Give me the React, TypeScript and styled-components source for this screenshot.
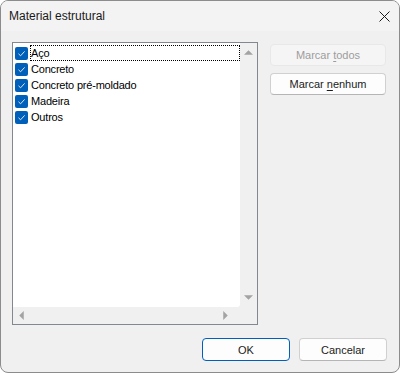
import { FC } from "react";
import styled, { createGlobalStyle } from "styled-components";

const font = `"Liberation Sans", Arial, sans-serif`;

const GlobalStyle = createGlobalStyle`
  html, body {
    margin: 0;
    padding: 0;
    background: #ffffff;
  }
  body {
    font-family: ${font};
  }
`;

const Window = styled.div`
  width: 400px;
  height: 373px;
  box-sizing: border-box;
  border: 1px solid #8c8c8c;
  border-radius: 8px;
  overflow: hidden;
  background: #f0f0f0;
  display: flex;
  flex-direction: column;
`;

const TitleBar = styled.div`
  height: 30px;
  flex: none;
  background: #f3f3f3;
  display: flex;
  align-items: center;
  justify-content: space-between;
  padding-left: 8px;
`;

const Title = styled.span`
  font-size: 12px;
  color: #1a1a1a;
  padding-bottom: 1px;
`;

const CloseButton = styled.div`
  width: 30px;
  height: 30px;
  display: flex;
  align-items: center;
  justify-content: center;
`;

const Body = styled.div`
  flex: 1;
  display: flex;
  flex-direction: column;
  padding: 11px 12px 11px 11px;
  gap: 13px;
`;

const Main = styled.div`
  display: flex;
  gap: 12px;
`;

const ListBox = styled.div`
  width: 246px;
  height: 283px;
  box-sizing: border-box;
  border: 1px solid #828790;
  display: grid;
  grid-template-columns: 1fr 17px;
  grid-template-rows: 1fr 17px;
  background: #f0f0f0;
`;

const Items = styled.div`
  background: #ffffff;
  padding-top: 1px;
  border-bottom-right-radius: 3px;
  display: flex;
  flex-direction: column;
`;

const Row = styled.div`
  height: 16px;
  display: flex;
  align-items: center;
  padding-left: 2px;
`;

const Check = styled.span`
  width: 13px;
  height: 13px;
  border-radius: 2px;
  background: #005fb8;
  display: flex;
  align-items: center;
  justify-content: center;
  margin-top: 3px;
  flex: none;
`;

const Label = styled.span<{ $focused?: boolean }>`
  flex: ${(p) => (p.$focused ? 1 : "none")};
  margin-left: 2px;
  padding: 0 1px;
  height: 16px;
  line-height: 16px;
  font-size: 11px;
  letter-spacing: -0.2px;
  color: #000000;
  outline: ${(p) => (p.$focused ? "1px dotted #000" : "none")};
  outline-offset: -1px;
  box-sizing: border-box;
  margin-top: 1px;
`;

const ScrollV = styled.div`
  display: flex;
  flex-direction: column;
  justify-content: space-between;
  align-items: center;
  padding: 7px 0 7px;
`;

const ScrollH = styled.div`
  display: flex;
  justify-content: space-between;
  align-items: center;
  padding: 0 12px 0 6px;
`;

const Buttons = styled.div`
  display: flex;
  flex-direction: column;
  gap: 7px;
  padding-top: 2px;
`;

const Button = styled.div<{ $disabled?: boolean; $default?: boolean }>`
  width: ${(p) => (p.$default !== undefined ? "88px" : "116px")};
  height: 22px;
  box-sizing: border-box;
  border-radius: 4px;
  display: flex;
  align-items: center;
  justify-content: center;
  font-size: 11px;
  background: ${(p) => (p.$disabled ? "#f5f5f5" : "#fdfdfd")};
  color: ${(p) => (p.$disabled ? "#9d9d9d" : "#1b1b1b")};
  border: 1px solid
    ${(p) => (p.$disabled ? "#e8e8e8" : p.$default ? "#005fb8" : "#d0d0d0")};
  border-bottom-color: ${(p) =>
    p.$disabled ? "#e8e8e8" : p.$default ? "#005fb8" : "#b5b5b5"};
  box-shadow: ${(p) => (p.$default ? "inset 0 0 0 1px #fdfdfd" : "none")};
  u {
    text-decoration-thickness: 1px;
    text-underline-offset: 2px;
  }
`;

const Footer = styled.div`
  display: flex;
  justify-content: flex-end;
  gap: 9px;
  & > div {
    height: 23px;
  }
`;

const Arrow: FC<{ dir: "up" | "down" | "left" | "right" }> = ({ dir }) => {
  const pts = {
    up: "0,4 4,0 8,4",
    down: "0,0 8,0 4,4",
    left: "4,0 4,8 0,4",
    right: "0,0 0,8 4,4",
  }[dir];
  const vertical = dir === "up" || dir === "down";
  return (
    <svg
      width={vertical ? 9 : 5}
      height={vertical ? 5 : 9}
      viewBox={vertical ? "0 0 8 4" : "0 0 4 8"}
    >
      <polygon points={pts} fill="#a3a3a3" />
    </svg>
  );
};

const CheckMark = () => (
  <svg width="9" height="9" viewBox="0 0 9 9">
    <path
      d="M1.5 4.8 L3.6 6.8 L7.6 2.4"
      fill="none"
      stroke="#d8e8f8"
      strokeWidth="1"
    />
  </svg>
);

const materials = ["Aço", "Concreto", "Concreto pré-moldado", "Madeira", "Outros"];

export default function App() {
  return (
    <>
      <GlobalStyle />
      <Window>
        <TitleBar>
          <Title>Material estrutural</Title>
          <CloseButton>
            <svg width="11" height="11" viewBox="0 0 11 11">
              <path d="M0.5 0.5 L10.5 10.5 M10.5 0.5 L0.5 10.5" stroke="#1a1a1a" strokeWidth="1" />
            </svg>
          </CloseButton>
        </TitleBar>
        <Body>
          <Main>
            <ListBox>
              <Items>
                {materials.map((m, i) => (
                  <Row key={m}>
                    <Check>
                      <CheckMark />
                    </Check>
                    <Label $focused={i === 0}>{m}</Label>
                  </Row>
                ))}
              </Items>
              <ScrollV>
                <Arrow dir="up" />
                <Arrow dir="down" />
              </ScrollV>
              <ScrollH>
                <Arrow dir="left" />
                <Arrow dir="right" />
              </ScrollH>
              <div />
            </ListBox>
            <Buttons>
              <Button $disabled>
                <span>
                  Marcar <u>t</u>odos
                </span>
              </Button>
              <Button>
                <span>
                  Marcar <u>n</u>enhum
                </span>
              </Button>
            </Buttons>
          </Main>
          <Footer>
            <Button $default>OK</Button>
            <Button $default={false}>Cancelar</Button>
          </Footer>
        </Body>
      </Window>
    </>
  );
}
